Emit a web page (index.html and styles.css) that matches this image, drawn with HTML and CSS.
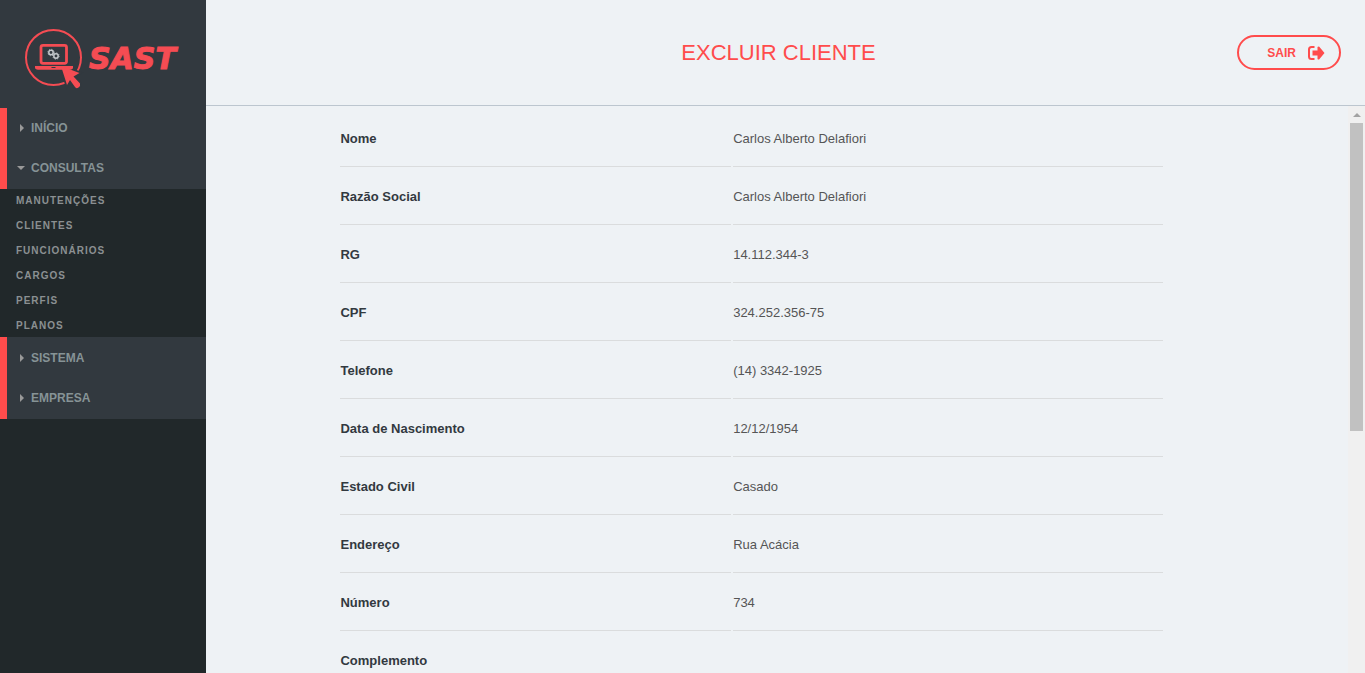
FILE: index.html
```html
<!DOCTYPE html>
<html lang="pt-BR">
<head>
<meta charset="utf-8">
<title>SAST - Excluir Cliente</title>
<link rel="stylesheet" href="styles.css">
</head>
<body>
<aside class="sidebar">
  <a class="brand" href="#" aria-label="SAST">
    <svg class="logo" width="160" height="62" viewBox="0 0 160 62">
      <circle cx="30.500" cy="31.500" r="27.500" fill="none" stroke="#f54c53" stroke-width="2"/>
      <path d="M38 40l18.500 7-6 3.500 6.500 7q.8 2.500-1.500 4t-3.500-.5l-5-7-3 5z" fill="none" stroke="#32393f" stroke-width="3.500"/>
      <rect x="18" y="19.300" width="25.500" height="18" rx="2" fill="none" stroke="#f54c53" stroke-width="2.800"/>
      <path d="M12 40h38v1.500q0 2-3 2.200H15q-3-.2-3-2.200z" fill="#f54c53"/>
      <path d="M28.500 41.500h4" stroke="#32393f"/>
      <g fill="none" stroke="#c4c8cb">
        <circle cx="28" cy="26.500" r="2.200" stroke-width="1.500"/>
        <circle cx="33" cy="30" r="2.200" stroke-width="1.500"/>
        <circle cx="28" cy="26.500" r="3.200" stroke-width=".8" stroke-dasharray="1.200 1.300"/>
        <circle cx="33" cy="30" r="3.200" stroke-width=".8" stroke-dasharray="1.200 1.300"/>
      </g>
      <path d="M38 40l18.500 7-6 3.500 6.500 7q.8 2.500-1.500 4t-3.500-.5l-5-7-3 5z" fill="#f54c53"/>
      <text class="wordmark" x="66" y="43">SAST</text>
    </svg>
  </a>
  <nav>
    <div class="group">
      <a class="item" href="#"><svg class="caret" width="8" height="8" viewBox="0 0 8 8"><path d="M3 0l4 4-4 4z"/></svg>INÍCIO</a>
      <button class="item" type="button" aria-expanded="true"><svg class="caret" width="8" height="8" viewBox="0 0 8 8"><path d="M0 2h8L4 6z"/></svg>CONSULTAS</button>
    </div>
    <div class="submenu">
      <a href="#">MANUTENÇÕES</a>
      <a href="#">CLIENTES</a>
      <a href="#">FUNCIONÁRIOS</a>
      <a href="#">CARGOS</a>
      <a href="#">PERFIS</a>
      <a href="#">PLANOS</a>
    </div>
    <div class="group group-bottom">
      <button class="item" type="button"><svg class="caret" width="8" height="8" viewBox="0 0 8 8"><path d="M3 0l4 4-4 4z"/></svg>SISTEMA</button>
      <button class="item" type="button"><svg class="caret" width="8" height="8" viewBox="0 0 8 8"><path d="M3 0l4 4-4 4z"/></svg>EMPRESA</button>
    </div>
  </nav>
</aside>
<div class="page">
  <header class="header">
    <h1>EXCLUIR CLIENTE</h1>
    <button class="logout" type="button">SAIR
      <svg width="17" height="14" viewBox="0 0 17 14"><path d="M6.500 1H3.500Q1 1 1 3.500v7Q1 13 3.500 13h3" fill="none" stroke="#ff4c4c" stroke-width="2"/><path d="M4.500 4.500h5V1q1-1 1.800-.3l5.200 6.300-5.200 6.300q-.8.700-1.800-.3V9.500h-5z" fill="#ff4c4c"/></svg>
    </button>
  </header>
  <div class="body">
    <main class="content">
      <table class="details">
        <tr><th scope="row">Nome</th><td>Carlos Alberto Delafiori</td></tr>
        <tr><th scope="row">Razão Social</th><td>Carlos Alberto Delafiori</td></tr>
        <tr><th scope="row">RG</th><td>14.112.344-3</td></tr>
        <tr><th scope="row">CPF</th><td>324.252.356-75</td></tr>
        <tr><th scope="row">Telefone</th><td>(14) 3342-1925</td></tr>
        <tr><th scope="row">Data de Nascimento</th><td>12/12/1954</td></tr>
        <tr><th scope="row">Estado Civil</th><td>Casado</td></tr>
        <tr><th scope="row">Endereço</th><td>Rua Acácia</td></tr>
        <tr><th scope="row">Número</th><td>734</td></tr>
        <tr><th scope="row">Complemento</th><td></td></tr>
      </table>
    </main>
    <div class="scrollbar" aria-hidden="true">
      <svg width="8" height="4" viewBox="0 0 8 4"><path d="M4 0l4 4H0z" fill="#a3a3a3"/></svg>
      <div class="thumb"></div>
    </div>
  </div>
</div>
</body>
</html>
```
FILE: styles.css
```css
* { box-sizing: border-box; }

body {
  margin: 0;
  height: 100vh;
  display: flex;
  overflow: hidden;
  background: #eef2f5;
  color: #555;
  font-family: "Liberation Sans", Arial, sans-serif;
  font-size: 13px;
}

a { color: inherit; text-decoration: none; }
button { font: inherit; color: inherit; background: none; border: 0; cursor: pointer; }

.sidebar {
  flex: 0 0 206px;
  background: #21282a;
}

.brand {
  display: block;
  height: 108px;
  padding: 26px 23px;
  background: #32393f;
}

.logo { display: block; overflow: visible; }

.wordmark {
  font: italic bold 30px "DejaVu Sans", sans-serif;
  fill: #f54c53;
  stroke: #f54c53;
  stroke-width: 1px;
}

.group {
  padding-bottom: 1px;
  border-left: 7px solid #ff4c4c;
  background: #32393f;
}

.group-bottom { padding-top: 1px; }

.item {
  display: flex;
  align-items: center;
  gap: 6px;
  width: 100%;
  height: 40px;
  padding: 0 10px;
  color: #869396;
  font-size: 12px;
  font-weight: bold;
  text-align: left;
}

.caret { fill: #999; }

.submenu {
  display: flex;
  flex-direction: column;
  gap: 2px;
  padding-left: 16px;
  color: #8b9092;
  font-size: 10px;
  font-weight: bold;
  line-height: 23px;
  letter-spacing: 1px;
}

.page {
  flex: 1;
  min-width: 0;
  display: flex;
  flex-direction: column;
}

.header {
  display: grid;
  grid-template-columns: 1fr auto 1fr;
  align-items: center;
  height: 106px;
  padding: 0 24px 0 10px;
  border-bottom: 1px solid #bcc6cf;
}

.header h1 {
  grid-column: 2;
  margin: 0;
  color: #ff4c4c;
  font-size: 22px;
  font-weight: normal;
}

.logout {
  justify-self: end;
  display: flex;
  align-items: center;
  gap: 12px;
  height: 35px;
  padding: 0 14px 0 28px;
  border: 2px solid #ff4c4c;
  border-radius: 18px;
  color: #ff4c4c;
  font-size: 12px;
  font-weight: bold;
}

.body {
  flex: 1;
  min-height: 0;
  display: flex;
}

.content {
  flex: 1;
  overflow: hidden;
  padding-top: 3px;
}

.details {
  width: 72.4%;
  margin-left: 11.6%;
  table-layout: fixed;
  border-spacing: 2px;
}

.details th,
.details td {
  height: 56px;
  padding: 0;
  border-bottom: 1px solid #dadcdd;
  text-align: left;
}

.details th {
  width: 47.6%;
  color: #32393f;
}

.scrollbar {
  flex: 0 0 17px;
  display: flex;
  flex-direction: column;
  align-items: center;
  gap: 6px;
  padding-top: 7px;
  background: #f0f0f0;
}

.thumb {
  width: 13px;
  height: 55%;
  background: #c1c1c1;
}
```
